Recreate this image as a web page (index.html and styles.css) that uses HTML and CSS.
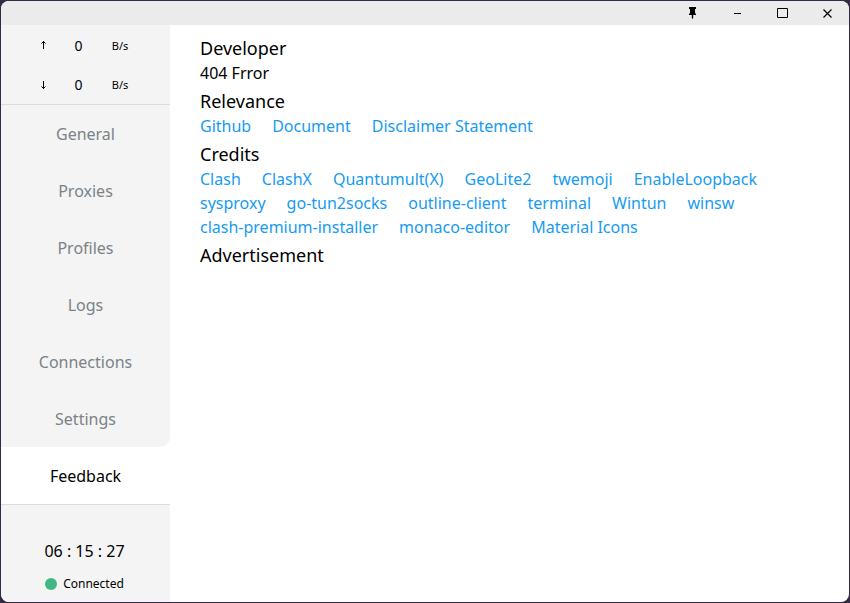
FILE: index.html
```html
<!DOCTYPE html>
<html lang="en">
<head>
<meta charset="utf-8">
<title>Feedback</title>
<link rel="stylesheet" href="styles.css">
</head>
<body>
<div class="window">
  <header class="titlebar">
    <button class="win-btn" aria-label="Pin"><svg width="15" height="15" viewBox="0 0 15 15"><path d="M4 1h7v2h-1v4.500h1V9H8.200v3l-.7 1-.7-1V9H4V7.500h1V3H4z" fill="#000"/></svg></button>
    <button class="win-btn" aria-label="Minimize"><svg width="15" height="15" viewBox="0 0 15 15"><path d="M4 7.500h7" stroke="#000"/></svg></button>
    <button class="win-btn" aria-label="Maximize"><svg width="15" height="15" viewBox="0 0 15 15"><path d="M2.500 2.500h10v9h-10z" fill="none" stroke="#000"/></svg></button>
    <button class="win-btn" aria-label="Close"><svg width="15" height="15" viewBox="0 0 15 15"><path d="M3.500 3.500l8 8m0-8l-8 8" stroke="#000" stroke-width="1.200"/></svg></button>
  </header>
  <div class="body">
    <aside class="sidebar">
      <div class="traffic">
        <div class="rate"><svg class="arrow" width="7" height="10" viewBox="0 0 7 10"><path d="M3.500 9V1M1.500 3.500l2-2 2 2" fill="none" stroke="#000"/></svg><span class="value">0</span><span class="unit">B/s</span></div>
        <div class="rate"><svg class="arrow" width="7" height="10" viewBox="0 0 7 10"><path d="M3.500 1v8M1.500 6.500l2 2 2-2" fill="none" stroke="#000"/></svg><span class="value">0</span><span class="unit">B/s</span></div>
      </div>
      <nav class="menu">
        <a class="item" href="#general">General</a>
        <a class="item" href="#proxies">Proxies</a>
        <a class="item" href="#profiles">Profiles</a>
        <a class="item" href="#logs">Logs</a>
        <a class="item" href="#connections">Connections</a>
        <a class="item before-active" href="#settings">Settings</a>
        <a class="item active" href="#feedback" aria-current="page">Feedback</a>
      </nav>
      <div class="status">
        <div class="clock">06 : 15 : 27</div>
        <div class="connection"><span class="dot"></span>Connected</div>
      </div>
    </aside>
    <main class="content">
      <section>
        <h2>Developer</h2>
        <p>404 Frror</p>
      </section>
      <section>
        <h2>Relevance</h2>
        <div class="links"><a href="#github">Github</a><a href="#document">Document</a><a href="#disclaimer">Disclaimer Statement</a></div>
      </section>
      <section>
        <h2>Credits</h2>
        <div class="links">
          <a href="#c1">Clash</a><a href="#c2">ClashX</a><a href="#c3">Quantumult(X)</a><a href="#c4">GeoLite2</a><a href="#c5">twemoji</a><a href="#c6">EnableLoopback</a><a href="#c7">sysproxy</a><a href="#c8">go-tun2socks</a><a href="#c9">outline-client</a><a href="#c10">terminal</a><a href="#c11">Wintun</a><a href="#c12">winsw</a><a href="#c13">clash-premium-installer</a><a href="#c14">monaco-editor</a><a href="#c15">Material Icons</a>
        </div>
      </section>
      <section>
        <h2>Advertisement</h2>
      </section>
    </main>
  </div>
</div>
</body>
</html>
```
FILE: styles.css
```css
* { box-sizing: border-box; }

body {
  margin: 0;
  padding: 1px;
  height: 100vh;
  background: #352a45;
  font-family: "Noto Sans", "Open Sans", sans-serif;
  font-size: 16px;
  color: #000;
}

.window {
  height: 100%;
  display: flex;
  flex-direction: column;
  background: #fff;
  border-radius: 8px;
  overflow: hidden;
}

.titlebar {
  display: flex;
  justify-content: flex-end;
  gap: 2px;
  height: 24px;
  background: #ebebeb;
}

.win-btn {
  display: flex;
  align-items: center;
  justify-content: center;
  width: 43px;
  padding: 0;
  border: 0;
  background: none;
}

.body {
  flex: 1;
  display: flex;
}

.sidebar {
  width: 169px;
  flex: none;
  display: flex;
  flex-direction: column;
}

.traffic {
  background: #f4f4f4;
  border-bottom: 1px solid #dcdcdc;
}

.rate {
  display: grid;
  grid-template-columns: 14px 57px 26px;
  justify-content: center;
  align-items: center;
  height: 40px;
  padding-right: 2px;
  font-size: 14px;
}

.rate:last-child { height: 39px; }
.arrow { justify-self: center; }
.value { text-align: center; }

.unit {
  font-size: 11px;
  text-align: center;
}

.menu { border-bottom: 1px solid #dcdcdc; }

.item {
  display: block;
  padding-top: 2px;
  line-height: 55px;
  text-align: center;
  color: #7b8288;
  background: #f4f4f4;
  text-decoration: none;
}

.before-active { border-bottom-right-radius: 10px; }

.active {
  background: #fff;
  color: #000;
}

.status {
  flex: 1;
  display: flex;
  flex-direction: column;
  justify-content: flex-end;
  align-items: center;
  gap: 11px;
  padding-right: 2px;
  padding-bottom: 8px;
  background: #f4f4f4;
}

.clock { line-height: 24px; }

.connection {
  display: flex;
  align-items: center;
  gap: 6px;
  font-size: 12px;
  line-height: 20px;
}

.dot {
  width: 12px;
  height: 12px;
  border-radius: 50%;
  background: #41b883;
}

.content {
  flex: 1;
  display: flex;
  flex-direction: column;
  gap: 3px;
  padding: 10px 30px;
}

h2, p { margin: 0; }

h2 {
  font-size: 18px;
  font-weight: 400;
  line-height: 26px;
}

p { line-height: 24px; }

.links {
  display: flex;
  flex-wrap: wrap;
  column-gap: 21px;
  line-height: 24px;
}

.links a {
  color: #179bf0;
  text-decoration: none;
}
```
